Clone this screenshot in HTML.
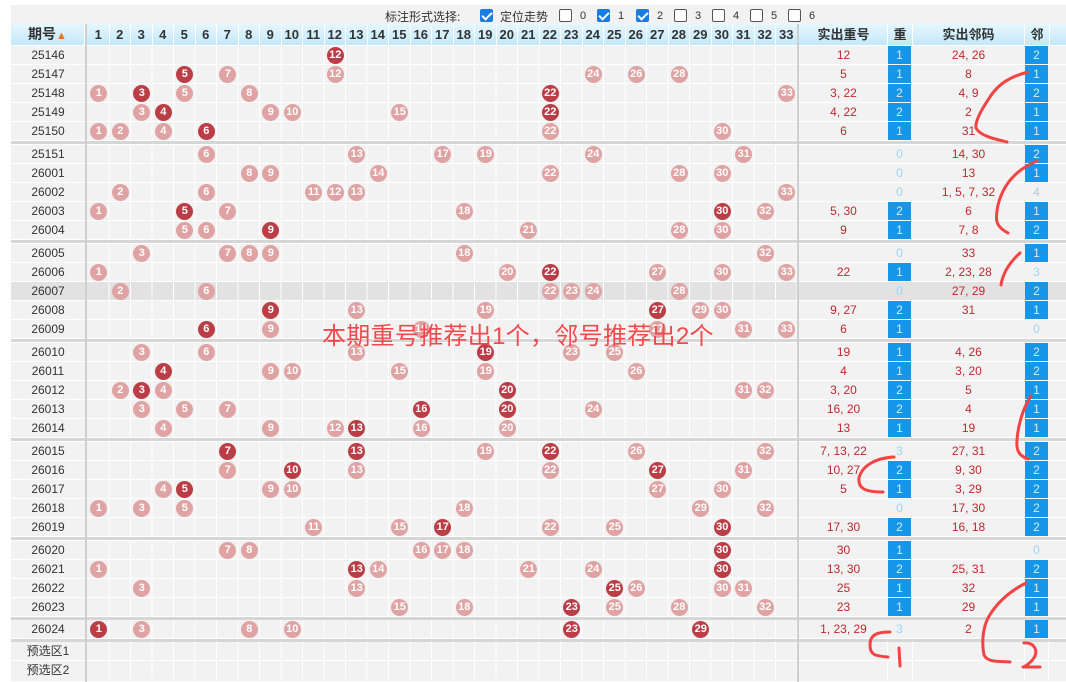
<!DOCTYPE html>
<html><head><meta charset="utf-8">
<style>
*{margin:0;padding:0;box-sizing:border-box}
body{width:1066px;height:682px;background:#fff;position:relative;overflow:hidden;font-family:"Liberation Sans","Noto Sans CJK SC",sans-serif}
.top{position:absolute;left:11px;top:5px;width:1055px;height:19px;background:#f2f2f2;font-size:12px;color:#333}
.top span{position:absolute;top:3px}
.cb{position:absolute;top:4px;width:13px;height:13px;border:1px solid #555;border-radius:2px;background:#fff}
.cb.k{background:#1a7be0;border-color:#1a7be0}
.cb.k:after{content:"";position:absolute;left:3px;top:0px;width:4px;height:8px;border:solid #fff;border-width:0 2px 2px 0;transform:rotate(45deg)}
.hd{position:absolute;left:11px;top:24px;width:1055px;height:21px;background:linear-gradient(#e6f6fe,#c3e8fa);font-weight:bold;color:#333;font-size:13px}
.hd span{position:absolute;top:0;height:21px;line-height:21px;text-align:center;border-right:1px solid #fff}
.r{position:absolute;left:11px;width:1055px;height:19px;border-bottom:1px solid #fff;background:#f2f2f2;font-size:12px}
.r.g{background:#e2e2e2}
.nums{position:absolute;left:77px;top:0;width:709.5px;height:18px;background:repeating-linear-gradient(to right,transparent 0 20.5px,#fff 20.5px 21.5px)}
.q{position:absolute;left:0;width:74px;text-align:center;top:0;line-height:18px;color:#333;font-weight:normal}
.b{position:absolute;top:1px;left:calc(57.75px + 21.5px*var(--n));width:17px;height:17px;border-radius:50%;background:#e0a3a3;color:#fff;font:bold 11px/17px "Liberation Sans",sans-serif;text-align:center;font-style:normal}
.b.d{background:#bb3d45}
.c1,.c2,.c3,.c4{position:absolute;top:0;height:18px;line-height:18px;text-align:center;color:#c0282e}
.c1{left:789px;width:87px}
.c2{left:877px;width:23px;background:#1596e8;color:#d4ecfd}
.c3{left:902px;width:111px}
.c4{left:1014px;width:23px;background:#1596e8;color:#d4ecfd}
.c2.l,.c4.l{background:transparent;color:#9dd4f4}
.c4.x{background:transparent;color:#b9c9d4}
.vl{position:absolute;top:24px;width:2px;height:658px;background:#cfcfcf}
.sp{position:absolute;left:11px;width:1055px;height:3px;background:#d6d6d6}
.ov{position:absolute;left:322px;top:316px;font-size:24px;letter-spacing:0.3px;color:#f24a4a;white-space:nowrap}
.cl{position:absolute;top:0;width:1px;height:18px;background:#fff}
</style></head><body>
<div class="top">
<span style="left:374px">标注形式选择:</span>
<i class="cb k" style="left:469px"></i><span style="left:489px">定位走势</span>
<i class="cb" style="left:548px"></i><span style="left:569px;top:5px;font-size:11px">0</span>
<i class="cb k" style="left:586px"></i><span style="left:607px;top:5px;font-size:11px">1</span>
<i class="cb k" style="left:625px"></i><span style="left:646px;top:5px;font-size:11px">2</span>
<i class="cb" style="left:663px"></i><span style="left:684px;top:5px;font-size:11px">3</span>
<i class="cb" style="left:701px"></i><span style="left:722px;top:5px;font-size:11px">4</span>
<i class="cb" style="left:739px"></i><span style="left:760px;top:5px;font-size:11px">5</span>
<i class="cb" style="left:777px"></i><span style="left:798px;top:5px;font-size:11px">6</span>
</div>
<div class="hd">
<span style="left:0;width:74px;font-size:14px">期号<b style="color:#f07020;font-size:11px">▲</b></span>
<span style="left:77px;width:21.5px">1</span><span style="left:98.5px;width:21.5px">2</span><span style="left:120px;width:21.5px">3</span><span style="left:141.5px;width:21.5px">4</span><span style="left:163px;width:21.5px">5</span><span style="left:184.5px;width:21.5px">6</span><span style="left:206px;width:21.5px">7</span><span style="left:227.5px;width:21.5px">8</span><span style="left:249px;width:21.5px">9</span><span style="left:270.5px;width:21.5px">10</span><span style="left:292px;width:21.5px">11</span><span style="left:313.5px;width:21.5px">12</span><span style="left:335px;width:21.5px">13</span><span style="left:356.5px;width:21.5px">14</span><span style="left:378px;width:21.5px">15</span><span style="left:399.5px;width:21.5px">16</span><span style="left:421px;width:21.5px">17</span><span style="left:442.5px;width:21.5px">18</span><span style="left:464px;width:21.5px">19</span><span style="left:485.5px;width:21.5px">20</span><span style="left:507px;width:21.5px">21</span><span style="left:528.5px;width:21.5px">22</span><span style="left:550px;width:21.5px">23</span><span style="left:571.5px;width:21.5px">24</span><span style="left:593px;width:21.5px">25</span><span style="left:614.5px;width:21.5px">26</span><span style="left:636px;width:21.5px">27</span><span style="left:657.5px;width:21.5px">28</span><span style="left:679px;width:21.5px">29</span><span style="left:700.5px;width:21.5px">30</span><span style="left:722px;width:21.5px">31</span><span style="left:743.5px;width:21.5px">32</span><span style="left:765px;width:21.5px">33</span>
<span style="left:789px;width:88px">实出重号</span><span style="left:877px;width:25px">重</span><span style="left:902px;width:112px">实出邻码</span><span style="left:1014px;width:25px">邻</span>
</div>

<div class="r" style="top:46px"><b class="q">25146</b><div class="nums"></div><i class="b d" style="--n:12">12</i><span class="c1">12</span><span class="c2">1</span><span class="c3">24, 26</span><span class="c4">2</span></div>
<div class="r" style="top:65px"><b class="q">25147</b><div class="nums"></div><i class="b d" style="--n:5">5</i><i class="b" style="--n:7">7</i><i class="b" style="--n:12">12</i><i class="b" style="--n:24">24</i><i class="b" style="--n:26">26</i><i class="b" style="--n:28">28</i><span class="c1">5</span><span class="c2">1</span><span class="c3">8</span><span class="c4">1</span></div>
<div class="r" style="top:84px"><b class="q">25148</b><div class="nums"></div><i class="b" style="--n:1">1</i><i class="b d" style="--n:3">3</i><i class="b" style="--n:5">5</i><i class="b" style="--n:8">8</i><i class="b d" style="--n:22">22</i><i class="b" style="--n:33">33</i><span class="c1">3, 22</span><span class="c2">2</span><span class="c3">4, 9</span><span class="c4">2</span></div>
<div class="r" style="top:103px"><b class="q">25149</b><div class="nums"></div><i class="b" style="--n:3">3</i><i class="b d" style="--n:4">4</i><i class="b" style="--n:9">9</i><i class="b" style="--n:10">10</i><i class="b" style="--n:15">15</i><i class="b d" style="--n:22">22</i><span class="c1">4, 22</span><span class="c2">2</span><span class="c3">2</span><span class="c4">1</span></div>
<div class="r" style="top:122px"><b class="q">25150</b><div class="nums"></div><i class="b" style="--n:1">1</i><i class="b" style="--n:2">2</i><i class="b" style="--n:4">4</i><i class="b d" style="--n:6">6</i><i class="b" style="--n:22">22</i><i class="b" style="--n:30">30</i><span class="c1">6</span><span class="c2">1</span><span class="c3">31</span><span class="c4">1</span></div>
<div class="sp" style="top:141px"></div>

<div class="r" style="top:145px"><b class="q">25151</b><div class="nums"></div><i class="b" style="--n:6">6</i><i class="b" style="--n:13">13</i><i class="b" style="--n:17">17</i><i class="b" style="--n:19">19</i><i class="b" style="--n:24">24</i><i class="b" style="--n:31">31</i><span class="c1"></span><span class="c2 l">0</span><span class="c3">14, 30</span><span class="c4">2</span></div>
<div class="r" style="top:164px"><b class="q">26001</b><div class="nums"></div><i class="b" style="--n:8">8</i><i class="b" style="--n:9">9</i><i class="b" style="--n:14">14</i><i class="b" style="--n:22">22</i><i class="b" style="--n:28">28</i><i class="b" style="--n:30">30</i><span class="c1"></span><span class="c2 l">0</span><span class="c3">13</span><span class="c4">1</span></div>
<div class="r" style="top:183px"><b class="q">26002</b><div class="nums"></div><i class="b" style="--n:2">2</i><i class="b" style="--n:6">6</i><i class="b" style="--n:11">11</i><i class="b" style="--n:12">12</i><i class="b" style="--n:13">13</i><i class="b" style="--n:33">33</i><span class="c1"></span><span class="c2 l">0</span><span class="c3">1, 5, 7, 32</span><span class="c4 x">4</span></div>
<div class="r" style="top:202px"><b class="q">26003</b><div class="nums"></div><i class="b" style="--n:1">1</i><i class="b d" style="--n:5">5</i><i class="b" style="--n:7">7</i><i class="b" style="--n:18">18</i><i class="b d" style="--n:30">30</i><i class="b" style="--n:32">32</i><span class="c1">5, 30</span><span class="c2">2</span><span class="c3">6</span><span class="c4">1</span></div>
<div class="r" style="top:221px"><b class="q">26004</b><div class="nums"></div><i class="b" style="--n:5">5</i><i class="b" style="--n:6">6</i><i class="b d" style="--n:9">9</i><i class="b" style="--n:21">21</i><i class="b" style="--n:28">28</i><i class="b" style="--n:30">30</i><span class="c1">9</span><span class="c2">1</span><span class="c3">7, 8</span><span class="c4">2</span></div>
<div class="sp" style="top:240px"></div>

<div class="r" style="top:244px"><b class="q">26005</b><div class="nums"></div><i class="b" style="--n:3">3</i><i class="b" style="--n:7">7</i><i class="b" style="--n:8">8</i><i class="b" style="--n:9">9</i><i class="b" style="--n:18">18</i><i class="b" style="--n:32">32</i><span class="c1"></span><span class="c2 l">0</span><span class="c3">33</span><span class="c4">1</span></div>
<div class="r" style="top:263px"><b class="q">26006</b><div class="nums"></div><i class="b" style="--n:1">1</i><i class="b" style="--n:20">20</i><i class="b d" style="--n:22">22</i><i class="b" style="--n:27">27</i><i class="b" style="--n:30">30</i><i class="b" style="--n:33">33</i><span class="c1">22</span><span class="c2">1</span><span class="c3">2, 23, 28</span><span class="c4 l">3</span></div>
<div class="r g" style="top:282px"><b class="q">26007</b><div class="nums"></div><i class="b" style="--n:2">2</i><i class="b" style="--n:6">6</i><i class="b" style="--n:22">22</i><i class="b" style="--n:23">23</i><i class="b" style="--n:24">24</i><i class="b" style="--n:28">28</i><span class="c1"></span><span class="c2 l">0</span><span class="c3">27, 29</span><span class="c4">2</span></div>
<div class="r" style="top:301px"><b class="q">26008</b><div class="nums"></div><i class="b d" style="--n:9">9</i><i class="b" style="--n:13">13</i><i class="b" style="--n:19">19</i><i class="b d" style="--n:27">27</i><i class="b" style="--n:29">29</i><i class="b" style="--n:30">30</i><span class="c1">9, 27</span><span class="c2">2</span><span class="c3">31</span><span class="c4">1</span></div>
<div class="r" style="top:320px"><b class="q">26009</b><div class="nums"></div><i class="b d" style="--n:6">6</i><i class="b" style="--n:9">9</i><i class="b" style="--n:16">16</i><i class="b" style="--n:27">27</i><i class="b" style="--n:31">31</i><i class="b" style="--n:33">33</i><span class="c1">6</span><span class="c2">1</span><span class="c3"></span><span class="c4 l">0</span></div>
<div class="sp" style="top:339px"></div>

<div class="r" style="top:343px"><b class="q">26010</b><div class="nums"></div><i class="b" style="--n:3">3</i><i class="b" style="--n:6">6</i><i class="b" style="--n:13">13</i><i class="b d" style="--n:19">19</i><i class="b" style="--n:23">23</i><i class="b" style="--n:25">25</i><span class="c1">19</span><span class="c2">1</span><span class="c3">4, 26</span><span class="c4">2</span></div>
<div class="r" style="top:362px"><b class="q">26011</b><div class="nums"></div><i class="b d" style="--n:4">4</i><i class="b" style="--n:9">9</i><i class="b" style="--n:10">10</i><i class="b" style="--n:15">15</i><i class="b" style="--n:19">19</i><i class="b" style="--n:26">26</i><span class="c1">4</span><span class="c2">1</span><span class="c3">3, 20</span><span class="c4">2</span></div>
<div class="r" style="top:381px"><b class="q">26012</b><div class="nums"></div><i class="b" style="--n:2">2</i><i class="b d" style="--n:3">3</i><i class="b" style="--n:4">4</i><i class="b d" style="--n:20">20</i><i class="b" style="--n:31">31</i><i class="b" style="--n:32">32</i><span class="c1">3, 20</span><span class="c2">2</span><span class="c3">5</span><span class="c4">1</span></div>
<div class="r" style="top:400px"><b class="q">26013</b><div class="nums"></div><i class="b" style="--n:3">3</i><i class="b" style="--n:5">5</i><i class="b" style="--n:7">7</i><i class="b d" style="--n:16">16</i><i class="b d" style="--n:20">20</i><i class="b" style="--n:24">24</i><span class="c1">16, 20</span><span class="c2">2</span><span class="c3">4</span><span class="c4">1</span></div>
<div class="r" style="top:419px"><b class="q">26014</b><div class="nums"></div><i class="b" style="--n:4">4</i><i class="b" style="--n:9">9</i><i class="b" style="--n:12">12</i><i class="b d" style="--n:13">13</i><i class="b" style="--n:16">16</i><i class="b" style="--n:20">20</i><span class="c1">13</span><span class="c2">1</span><span class="c3">19</span><span class="c4">1</span></div>
<div class="sp" style="top:438px"></div>

<div class="r" style="top:442px"><b class="q">26015</b><div class="nums"></div><i class="b d" style="--n:7">7</i><i class="b d" style="--n:13">13</i><i class="b" style="--n:19">19</i><i class="b d" style="--n:22">22</i><i class="b" style="--n:26">26</i><i class="b" style="--n:32">32</i><span class="c1">7, 13, 22</span><span class="c2 l">3</span><span class="c3">27, 31</span><span class="c4">2</span></div>
<div class="r" style="top:461px"><b class="q">26016</b><div class="nums"></div><i class="b" style="--n:7">7</i><i class="b d" style="--n:10">10</i><i class="b" style="--n:13">13</i><i class="b" style="--n:22">22</i><i class="b d" style="--n:27">27</i><i class="b" style="--n:31">31</i><span class="c1">10, 27</span><span class="c2">2</span><span class="c3">9, 30</span><span class="c4">2</span></div>
<div class="r" style="top:480px"><b class="q">26017</b><div class="nums"></div><i class="b" style="--n:4">4</i><i class="b d" style="--n:5">5</i><i class="b" style="--n:9">9</i><i class="b" style="--n:10">10</i><i class="b" style="--n:27">27</i><i class="b" style="--n:30">30</i><span class="c1">5</span><span class="c2">1</span><span class="c3">3, 29</span><span class="c4">2</span></div>
<div class="r" style="top:499px"><b class="q">26018</b><div class="nums"></div><i class="b" style="--n:1">1</i><i class="b" style="--n:3">3</i><i class="b" style="--n:5">5</i><i class="b" style="--n:18">18</i><i class="b" style="--n:29">29</i><i class="b" style="--n:32">32</i><span class="c1"></span><span class="c2 l">0</span><span class="c3">17, 30</span><span class="c4">2</span></div>
<div class="r" style="top:518px"><b class="q">26019</b><div class="nums"></div><i class="b" style="--n:11">11</i><i class="b" style="--n:15">15</i><i class="b d" style="--n:17">17</i><i class="b" style="--n:22">22</i><i class="b" style="--n:25">25</i><i class="b d" style="--n:30">30</i><span class="c1">17, 30</span><span class="c2">2</span><span class="c3">16, 18</span><span class="c4">2</span></div>
<div class="sp" style="top:537px"></div>

<div class="r" style="top:541px"><b class="q">26020</b><div class="nums"></div><i class="b" style="--n:7">7</i><i class="b" style="--n:8">8</i><i class="b" style="--n:16">16</i><i class="b" style="--n:17">17</i><i class="b" style="--n:18">18</i><i class="b d" style="--n:30">30</i><span class="c1">30</span><span class="c2">1</span><span class="c3"></span><span class="c4 l">0</span></div>
<div class="r" style="top:560px"><b class="q">26021</b><div class="nums"></div><i class="b" style="--n:1">1</i><i class="b d" style="--n:13">13</i><i class="b" style="--n:14">14</i><i class="b" style="--n:21">21</i><i class="b" style="--n:24">24</i><i class="b d" style="--n:30">30</i><span class="c1">13, 30</span><span class="c2">2</span><span class="c3">25, 31</span><span class="c4">2</span></div>
<div class="r" style="top:579px"><b class="q">26022</b><div class="nums"></div><i class="b" style="--n:3">3</i><i class="b" style="--n:13">13</i><i class="b d" style="--n:25">25</i><i class="b" style="--n:26">26</i><i class="b" style="--n:30">30</i><i class="b" style="--n:31">31</i><span class="c1">25</span><span class="c2">1</span><span class="c3">32</span><span class="c4">1</span></div>
<div class="r" style="top:598px"><b class="q">26023</b><div class="nums"></div><i class="b" style="--n:15">15</i><i class="b" style="--n:18">18</i><i class="b d" style="--n:23">23</i><i class="b" style="--n:25">25</i><i class="b" style="--n:28">28</i><i class="b" style="--n:32">32</i><span class="c1">23</span><span class="c2">1</span><span class="c3">29</span><span class="c4">1</span></div>
<div class="sp" style="top:617px"></div>

<div class="r" style="top:620px"><b class="q">26024</b><div class="nums"></div><i class="b d" style="--n:1">1</i><i class="b" style="--n:3">3</i><i class="b" style="--n:8">8</i><i class="b" style="--n:10">10</i><i class="b d" style="--n:23">23</i><i class="b d" style="--n:29">29</i><span class="c1">1, 23, 29</span><span class="c2 l">3</span><span class="c3">2</span><span class="c4">1</span></div>
<div class="sp" style="top:639px"></div>
<div class="r" style="top:642px"><b class="q">预选区1</b><div class="nums"></div><i class="cl" style="left:876px"></i><i class="cl" style="left:901px"></i><i class="cl" style="left:1013px"></i><i class="cl" style="left:1037px"></i></div>
<div class="r" style="top:661px;height:21px"><b class="q">预选区2</b><div class="nums"></div><i class="cl" style="left:876px"></i><i class="cl" style="left:901px"></i><i class="cl" style="left:1013px"></i><i class="cl" style="left:1037px"></i></div>

<div class="vl" style="left:85px"></div>
<div class="vl" style="left:797px"></div>

<div class="ov">本期重号推荐出1个，邻号推荐出2个</div>

<svg width="1066" height="682" style="position:absolute;left:0;top:0" fill="none" stroke="#f24444" stroke-width="3" stroke-linecap="round" stroke-linejoin="round">
<path d="M1028 72 C1005 78 995 88 988 100 C980 112 975 122 976 128 C980 136 995 139 1007 142"/>
<path d="M1037 161 C1015 170 1003 185 998 205 C995 220 995 226 1008 233"/>
<path d="M1020 253 C1010 262 1003 272 1001 285"/>
<path d="M1031 396 C1023 408 1018 425 1017 440 C1016 452 1020 456 1028 459"/>
<path d="M894 457 C875 458 862 466 859 478 C858 488 864 492 883 492"/>
<path d="M890 632 C878 632 870 634 870 645 C870 655 875 656 888 657"/>
<path d="M899 648 L900 666"/>
<path d="M1026 583 C1008 592 995 605 988 618 C982 630 982 645 984 655 C988 663 1000 661 1010 662"/>
<path d="M1024 643 C1032 642 1038 648 1035 656 C1032 662 1026 666 1023 667 L1040 667"/>
</svg>
</body></html>
